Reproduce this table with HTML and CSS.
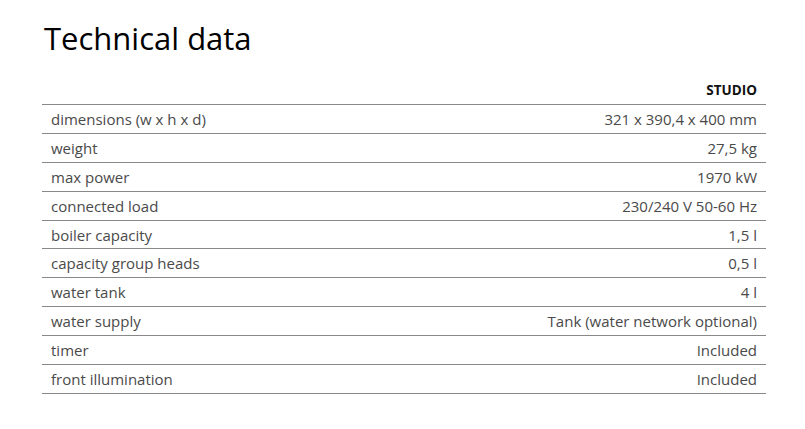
FILE: index.html
```html
<!DOCTYPE html>
<html>
<head>
<meta charset="utf-8">
<link rel="stylesheet" href="styles.css">
</head>
<body>
<div class="page">
  <h1 class="title">Technical data</h1>
  <table class="spec">
    <thead>
      <tr><th></th><th class="model">STUDIO</th></tr>
    </thead>
    <tbody>
      <tr><td>dimensions (w x h x d)</td><td class="val">321 x 390,4 x 400 mm</td></tr>
      <tr><td>weight</td><td class="val">27,5 kg</td></tr>
      <tr><td>max power</td><td class="val">1970 kW</td></tr>
      <tr><td>connected load</td><td class="val">230/240 V 50-60 Hz</td></tr>
      <tr><td>boiler capacity</td><td class="val">1,5 l</td></tr>
      <tr><td>capacity group heads</td><td class="val">0,5 l</td></tr>
      <tr><td>water tank</td><td class="val">4 l</td></tr>
      <tr><td>water supply</td><td class="val">Tank (water network optional)</td></tr>
      <tr><td>timer</td><td class="val">Included</td></tr>
      <tr><td>front illumination</td><td class="val">Included</td></tr>
    </tbody>
  </table>
</div>
</body>
</html>
```
FILE: styles.css
```css
html, body {
  margin: 0;
  padding: 0;
  background: #fff;
}
.page {
  padding: 18px 0 0 42px;
  width: 724px;
  font-family: "Open Sans", "Liberation Sans", sans-serif;
}
.title {
  margin: 0 0 0 2px;
  font-family: "Open Sans", sans-serif;
  font-weight: 500;
  font-size: 31px;
  line-height: 40px;
  color: #000;
  letter-spacing: 0;
}
.spec {
  margin-top: 18px;
  width: 724px;
  border-collapse: collapse;
  font-size: 15px;
  color: #4a4a4a;
}
.spec th {
  height: 28px;
  padding: 0 9px;
  text-align: right;
  font-weight: 700;
  color: #111;
  font-size: 13.5px;
  border-bottom: 1px solid #888;
}
.spec td {
  height: 27.9px;
  padding: 0 9px;
  border-bottom: 1px solid #888;
}
.spec td.val {
  text-align: right;
}
```
